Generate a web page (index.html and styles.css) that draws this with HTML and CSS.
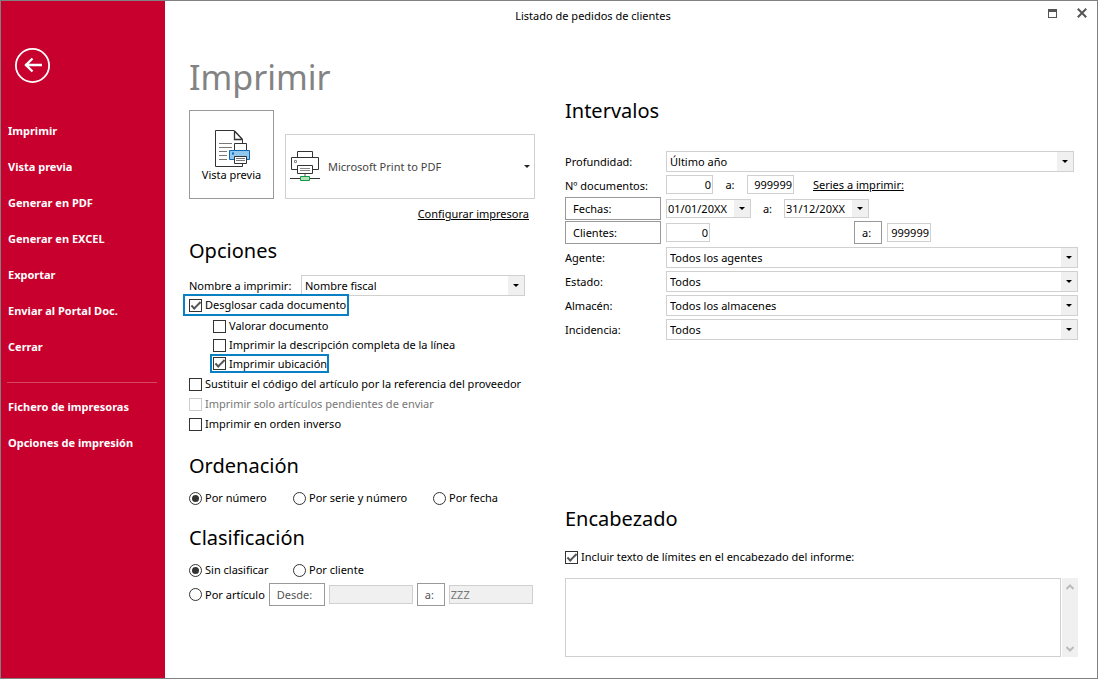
FILE: index.html
```html
<!DOCTYPE html>
<html lang="es">
<head>
<meta charset="utf-8">
<meta name="viewport" content="width=device-width, initial-scale=1">
<title>Listado de pedidos de clientes</title>
<link rel="stylesheet" href="styles.css">
</head>
<body>
<div class="window">
  <nav class="sidebar" aria-label="Menú">
    <button class="back" type="button" aria-label="Volver">
      <svg viewBox="0 0 36 36" width="36" height="36" fill="none" stroke="#fff" stroke-width="2">
        <circle cx="18.500" cy="17.500" r="16.600" stroke-width="1.8"/>
        <path d="M11 17H28M18.500 10.500L12 17l6.500 6.500" stroke-width="2.400"/>
      </svg>
    </button>
    <ul class="menu">
      <li><a href="#">Imprimir</a></li>
      <li><a href="#">Vista previa</a></li>
      <li><a href="#">Generar en PDF</a></li>
      <li><a href="#">Generar en EXCEL</a></li>
      <li><a href="#">Exportar</a></li>
      <li><a href="#">Enviar al Portal Doc.</a></li>
      <li><a href="#">Cerrar</a></li>
    </ul>
    <hr class="divider">
    <ul class="menu">
      <li><a href="#">Fichero de impresoras</a></li>
      <li><a href="#">Opciones de impresión</a></li>
    </ul>
  </nav>

  <div class="page">
    <header class="titlebar">
      <span class="caption">Listado de pedidos de clientes</span>
      <div class="winbuttons">
        <button type="button" aria-label="Maximizar">
          <svg viewBox="0 0 9 9" width="9" height="9" shape-rendering="crispEdges"><path d="M0 0h9v9H0zM1 3v5h7V3z" fill="#555" fill-rule="evenodd"/></svg>
        </button>
        <button type="button" aria-label="Cerrar ventana">
          <svg viewBox="0 0 10 10" width="10" height="10"><path d="M.8.800l8.400 8.400M9.200.8L.8 9.200" stroke="#555" stroke-width="2" fill="none"/></svg>
        </button>
      </div>
    </header>

    <main class="content">
      <div class="column">
        <h1>Imprimir</h1>
        <div class="printer-row">
          <button class="preview" type="button">
            <svg viewBox="0 0 37 39" width="37" height="39" fill="none" stroke="#333" stroke-width="1">
              <path d="M2.500 2.500H21L29.500 11.500V38.500H2.500z" fill="#fff"/>
              <path d="M21.500 2.500V11.500H29.500M21.500 3l8 8.500" stroke-width="1.300"/>
              <path d="M6 15.500h13M6 19.500h13M6 23.500h8M6 27.500h8M6 31.500h8" stroke="#777"/>
              <path d="M21.500 22.500v-7h12v7z" fill="#fff"/>
              <path d="M16.500 22.500h20v9h-20z" fill="#92c8ee" stroke="#0e68b4"/>
              <path d="M19 24.500h2v2h-2z" fill="#0e68b4" stroke="none"/>
              <path d="M21.500 28.500h12v7h-12z" fill="#fff"/>
              <path d="M23 30.500h9M23 32.500h9" stroke="#777"/>
            </svg>
            <span>Vista previa</span>
          </button>
          <button class="printer" type="button">
            <svg viewBox="0 0 30 31" width="30" height="31" fill="none" stroke="#333">
              <path d="M7.500 6.500v-6h15v6"/>
              <path d="M7 18.500H1.500v-12h27v12H23"/>
              <path d="M4.500 9.500h2v2h-2z" stroke="#888"/>
              <path d="M7.500 14.500h15v8h-15z" fill="#fff"/>
              <path d="M10 17.500h10M10 19.500h10" stroke="#888"/>
              <path d="M15 23v3" stroke="#aaa" stroke-width="2"/>
              <path d="M0 27.500h30"/>
              <path d="M10.500 25.500h9v4h-9z" fill="#b5e0b9" stroke="#119a48"/>
            </svg>
            <span class="printer-name">Microsoft Print to PDF</span>
            <i class="caret"></i>
          </button>
        </div>
        <p class="configure"><a href="#">Configurar impresora</a></p>

        <section>
          <h2>Opciones</h2>
          <div class="name-row">
            <label for="nombre">Nombre a imprimir:</label>
            <span class="combo"><select id="nombre"><option>Nombre fiscal</option></select></span>
          </div>
          <div class="checks">
            <label class="choice marked"><input type="checkbox" checked>Desglosar cada documento</label>
            <label class="choice nested"><input type="checkbox">Valorar documento</label>
            <label class="choice nested tight"><input type="checkbox">Imprimir la descripción completa de la línea</label>
            <label class="choice nested marked"><input type="checkbox" checked>Imprimir ubicación</label>
            <label class="choice"><input type="checkbox">Sustituir el código del artículo por la referencia del proveedor</label>
            <label class="choice off"><input type="checkbox" disabled>Imprimir solo artículos pendientes de enviar</label>
            <label class="choice"><input type="checkbox">Imprimir en orden inverso</label>
          </div>
        </section>

        <section class="block">
          <h2>Ordenación</h2>
          <div class="radios">
            <label class="choice"><input type="radio" name="orden" checked>Por número</label>
            <label class="choice"><input type="radio" name="orden">Por serie y número</label>
            <label class="choice"><input type="radio" name="orden">Por fecha</label>
          </div>
        </section>

        <section class="block second">
          <h2>Clasificación</h2>
          <div class="radios">
            <label class="choice"><input type="radio" name="clase" checked>Sin clasificar</label>
            <label class="choice"><input type="radio" name="clase">Por cliente</label>
          </div>
          <div class="article">
            <label class="choice"><input type="radio" name="clase">Por artículo</label>
            <button class="box" type="button" disabled>Desde:</button>
            <input class="field" type="text" aria-label="Desde artículo" disabled>
            <button class="box short" type="button" disabled>a:</button>
            <input class="field" type="text" value="ZZZ" aria-label="Hasta artículo" disabled>
          </div>
        </section>
      </div>

      <div class="column right">
        <section>
          <h2>Intervalos</h2>
          <div class="form">
            <label for="prof">Profundidad:</label>
            <span class="combo inset"><select id="prof"><option>Último año</option></select></span>

            <label for="doc1">Nº documentos:</label>
            <div class="line">
              <input class="field num wide" id="doc1" type="text" value="0">
              <label class="to" for="doc2">a:</label>
              <input class="field num wide" id="doc2" type="text" value="999999">
              <a class="series" href="#">Series a imprimir:</a>
            </div>

            <button class="box" type="button">Fechas:</button>
            <div class="line">
              <span class="combo date"><select aria-label="Fecha inicial"><option>01/01/20XX</option></select></span>
              <span class="to date-to">a:</span>
              <span class="combo date"><select aria-label="Fecha final"><option>31/12/20XX</option></select></span>
            </div>

            <button class="box" type="button">Clientes:</button>
            <div class="line">
              <input class="field num" type="text" value="0" aria-label="Cliente inicial">
              <button class="box short until" type="button">a:</button>
              <input class="field num" type="text" value="999999" aria-label="Cliente final">
            </div>

            <label for="agente">Agente:</label>
            <span class="combo"><select id="agente"><option>Todos los agentes</option></select></span>
            <label for="estado">Estado:</label>
            <span class="combo"><select id="estado"><option>Todos</option></select></span>
            <label for="almacen">Almacén:</label>
            <span class="combo"><select id="almacen"><option>Todos los almacenes</option></select></span>
            <label for="incidencia">Incidencia:</label>
            <span class="combo"><select id="incidencia"><option>Todos</option></select></span>
          </div>
        </section>

        <section class="heading-block">
          <h2>Encabezado</h2>
          <label class="choice"><input type="checkbox" checked>Incluir texto de límites en el encabezado del informe:</label>
          <div class="memo">
            <textarea aria-label="Texto del encabezado"></textarea>
            <div class="scroll">
              <svg viewBox="0 0 8 6" width="8" height="6" fill="none" stroke="#bbb" stroke-width="2"><path d="M.5 5L4 1.500 7.500 5"/></svg>
              <svg viewBox="0 0 8 6" width="8" height="6" fill="none" stroke="#bbb" stroke-width="2"><path d="M.5 1L4 4.500 7.500 1"/></svg>
            </div>
          </div>
        </section>
      </div>
    </main>
  </div>
</div>
</body>
</html>
```
FILE: styles.css
```css
* { box-sizing: border-box; }

body {
  margin: 0;
  font: 11px/20px "Noto Sans", "Open Sans", sans-serif;
  color: #000;
  background: #fff;
}

button, input, select, textarea { font: inherit; color: inherit; margin: 0; padding: 0; }
button { background: none; border: 0; }
a { color: inherit; }

.window {
  display: flex;
  min-height: 100vh;
  border: 1px solid #808080;
}

/* Sidebar */
.sidebar {
  flex: 0 0 164px;
  padding: 47px 8px 8px 7px;
  background: #c8002d;
  color: #fff;
  font-weight: bold;
  line-height: 36px;
}
.back { display: block; width: 36px; height: 36px; margin: 0 0 29px 6px; }
.back svg { display: block; }
.menu { list-style: none; margin: 0; padding: 0; }
.menu a { display: block; text-decoration: none; }
.divider { height: 1px; margin: 17px 0 6px -1px; border: 0; background: #d6465f; }

/* Title bar */
.page { flex: 1; min-width: 0; }
.titlebar { display: flex; height: 31px; }
.caption { flex: 1; text-align: center; line-height: 30px; }
.winbuttons { display: flex; width: 76px; gap: 20px; padding: 7px 10px 0 26px; }
.winbuttons button { width: 10px; height: 10px; line-height: 0; }

/* Columns */
.content {
  display: grid;
  grid-template-columns: 350px minmax(400px, 1fr);
  column-gap: 26px;
  padding: 21px 19px 20px 24px;
}
h1 { margin: 0 0 9px; font: 34px/48px "Noto Sans", sans-serif; color: #838383; }
h2 { margin: 0; font: 20px/32px "Noto Sans", sans-serif; }

.printer-row { display: flex; align-items: flex-end; gap: 11px; }
.preview {
  display: flex;
  flex-direction: column;
  align-items: center;
  justify-content: center;
  width: 85px;
  height: 89px;
  padding-top: 2px;
  border: 1px solid #999;
  line-height: 16px;
}
.printer {
  display: flex;
  align-items: center;
  gap: 8px;
  width: 250px;
  height: 65px;
  padding: 0 4px;
  border: 1px solid #d0d0d0;
  color: #444;
}
.printer-name { flex: 1; text-align: left; }
.caret { border: 3px solid transparent; border-top-color: #222; border-bottom: 0; }
.configure { width: 345px; margin: 5px 0 11px; padding-right: 5px; text-align: right; }

/* Combo boxes */
.combo { position: relative; display: block; height: 21px; }
.combo select {
  display: block;
  width: 100%;
  height: 100%;
  padding: 0 20px 0 3px;
  appearance: none;
  border: 1px solid #d0d0d0;
  border-radius: 0;
  background: linear-gradient(#f0f0f0, #f0f0f0) right / 16px 100% no-repeat #fff;
  line-height: 19px;
}
.combo::after {
  content: "";
  position: absolute;
  right: 6px;
  top: 9px;
  border: 3px solid transparent;
  border-top-color: #000;
  border-bottom: 0;
  pointer-events: none;
}
.name-row { display: grid; grid-template-columns: 112px 224px; margin-top: 8px; line-height: 21px; }

/* Tick boxes and radio buttons */
.choice { display: flex; align-items: center; gap: 3px; width: max-content; height: 20px; }
.choice input {
  flex: none;
  display: grid;
  place-items: center;
  width: 13px;
  height: 13px;
  appearance: none;
  border: 1px solid #333;
  background: #fff;
}
.choice input[type="radio"] { border-radius: 50%; }
.choice input[type="radio"]:checked::before {
  content: "";
  width: 7px;
  height: 7px;
  border-radius: 50%;
  background: #333;
}
.choice input[type="checkbox"]:checked::before {
  content: "";
  box-sizing: border-box;
  width: 10px;
  height: 5px;
  border: solid #555;
  border-width: 0 0 2px 2px;
  transform: translateY(-1px) rotate(-45deg);
}
.choice.off { color: #777; }
.choice.off input { border-color: #ccc; }
.nested { margin-left: 24px; }
.tight { height: 18px; }
.marked {
  position: relative;
  height: 18px;
  margin: 0 0 2px -4px;
  padding: 0 1px 0 4px;
  outline: 2px solid #0a80c4;
}
.marked.nested { height: 15px; margin: 2px 0 3px 23px; padding: 0 0 0 1px; }

.block { margin-top: 16px; }
.second { margin-top: 14px; }
.radios { display: grid; grid-template-columns: 104px 140px max-content; margin-top: 6px; }
.article { display: flex; align-items: center; gap: 4px; margin-top: 3px; }
.article .box { width: 56px; color: #555; }
.article .short { width: 28px; }
.article .field { width: 84px; }

/* Fields and boxed captions */
.box { height: 23px; padding: 0 7px; border: 1px solid #999; text-align: left; }
.box.short { width: 28px; }
.field { width: 44px; height: 19px; padding: 0 1px; border: 1px solid #d0d0d0; background: #fff; }
.field:disabled { background: #f0f0f0; color: #777; }
.num { text-align: right; }
.num.wide { width: 47px; }

/* Interval form */
.right { padding-top: 42px; }
.form {
  display: grid;
  grid-template-columns: 96px minmax(0, 1fr);
  grid-auto-rows: 24px;
  column-gap: 5px;
  align-items: start;
  margin-top: 22px;
}
.form > label { line-height: 26px; }
.form > .combo { margin-top: 2px; }
.inset { margin-right: 4px; }
.line { display: flex; align-items: center; height: 23px; }
.to { width: 34px; text-align: center; }
.date { width: 85px; height: 19px; }
.date select { padding-left: 1px; line-height: 16px; }
.date::after { top: 8px; }
.date-to { width: 33px; }
.series { margin-left: 19px; }
.until { margin: 0 5px 0 144px; }

.heading-block { margin-top: 162px; }
.heading-block .choice { margin-top: 12px; }
.memo { display: flex; gap: 1px; height: 79px; margin-top: 11px; }
.memo textarea { flex: 1; resize: none; border: 1px solid #d0d0d0; border-radius: 0; }
.scroll {
  display: flex;
  flex-direction: column;
  align-items: center;
  justify-content: space-between;
  width: 16px;
  padding: 6px 0 5px;
  background: #f0f0f0;
}
```
